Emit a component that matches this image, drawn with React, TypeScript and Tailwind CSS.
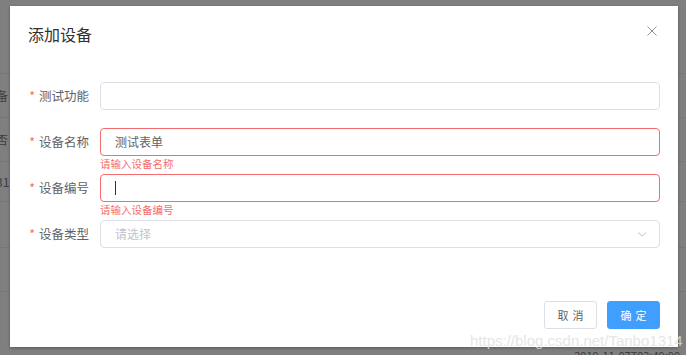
import React from 'react';

type Field = {
  label: string;
  value?: string;
  placeholder?: string;
  error?: string;
  caret?: boolean;
  select?: boolean;
};

const fields: Field[] = [
  { label: '测试功能' },
  { label: '设备名称', value: '测试表单', error: '请输入设备名称' },
  { label: '设备编号', caret: true, error: '请输入设备编号' },
  { label: '设备类型', placeholder: '请选择', select: true },
];

// rows of the table behind the mask (only the edges peek out)
const bgRows = [
  { h: 'h-[74px]', cell: '' },
  { h: 'h-[44px]', cell: '备' },
  { h: 'h-[44px]', cell: '否' },
  { h: 'h-[40px]', cell: '31' },
  { h: 'h-[46px]', cell: '' },
  { h: 'h-[44px]', cell: '' },
];

const FONT = "font-['Noto_Sans_CJK_SC','Liberation_Sans',sans-serif]";

const FormRow: React.FC<{ field: Field }> = ({ field }) => (
  <div className="flex h-[28px] mb-[18px]">
    <label className="w-[72px] pr-[11px] flex items-center justify-end text-[12.5px] text-[#606266] whitespace-nowrap">
      <span className="text-[#f56c6c] mr-[4px]">*</span>
      {field.label}
    </label>
    <div className="relative flex-1">
      <div
        className={`h-full rounded-[4px] border bg-white flex items-center px-[14px] text-[12px] ${
          field.error ? 'border-[#f56c6c]' : 'border-[#dcdfe6]'
        }`}
      >
        {field.value && <span className="text-[#606266]">{field.value}</span>}
        {field.caret && <span className="w-px h-[14px] bg-[#303133]" />}
        {field.placeholder && <span className="text-[#c0c4cc]">{field.placeholder}</span>}
        {field.select && (
          <svg className="ml-auto -mr-[3px]" width="12" height="12" viewBox="0 0 12 12" fill="none">
            <path d="M2 4.5 L6 8 L10 4.5" stroke="#c0c4cc" strokeWidth="1" />
          </svg>
        )}
      </div>
      {field.error && (
        <div className="absolute left-0 top-full mt-[1px] text-[10.5px] leading-[14px] text-[#f56c6c]">
          {field.error}
        </div>
      )}
    </div>
  </div>
);

export default function App() {
  return (
    <div className={`relative w-[686px] h-[355px] overflow-hidden bg-[#7f7f7f] ${FONT}`}>
      {/* page behind the mask */}
      <div className="absolute inset-0 flex flex-col text-[#3c3c3c] text-[12px]">
        {bgRows.map((r, i) => (
          <div key={i} className={`${r.h} shrink-0 border-b border-[#767676] flex items-center -ml-[4px]`}>
            {r.cell}
          </div>
        ))}
        <div className="flex-1 flex items-end justify-end pr-[6px] text-[11px] leading-[10px] -mb-[5px]">
          2019-11-07T03:49:00
        </div>
      </div>

      <div className="relative pt-[6px] pl-[10px]">
        <div className="w-[668px] h-[341px] bg-white flex flex-col shadow-[0_1px_3px_rgba(0,0,0,0.3)]">
          <div className="h-[56px] px-[18px] flex items-center justify-between">
            <span className="text-[16px] text-[#303133]">添加设备</span>
            <svg width="12" height="12" viewBox="0 0 12 12" className="mr-[2px] -mt-[6px]">
              <path d="M1.5 1.5 L10.5 10.5 M10.5 1.5 L1.5 10.5" stroke="#909399" strokeWidth="1" />
            </svg>
          </div>

          <div className="pt-[20px] px-[18px]">
            {fields.map((f) => (
              <FormRow key={f.label} field={f} />
            ))}
          </div>

          <div className="mt-auto mb-[18px] pr-[18px] flex justify-end gap-[10px]">
            <button className="w-[53px] h-[28px] rounded-[3px] border border-[#dcdfe6] bg-white text-[11px] text-[#606266] tracking-[4px] pl-[4px]">
              取消
            </button>
            <button className="w-[53px] h-[28px] rounded-[3px] border border-[#409eff] bg-[#409eff] text-[11px] text-white tracking-[4px] pl-[4px]">
              确定
            </button>
          </div>
        </div>
      </div>

      {/* blog watermark over the screenshot */}
      <span className="absolute left-[470px] top-[330px] text-[15px] text-[#e0e0e0] font-['Liberation_Sans',sans-serif] opacity-80">
        https://blog.csdn.net/Tanbo1314
      </span>
    </div>
  );
}
